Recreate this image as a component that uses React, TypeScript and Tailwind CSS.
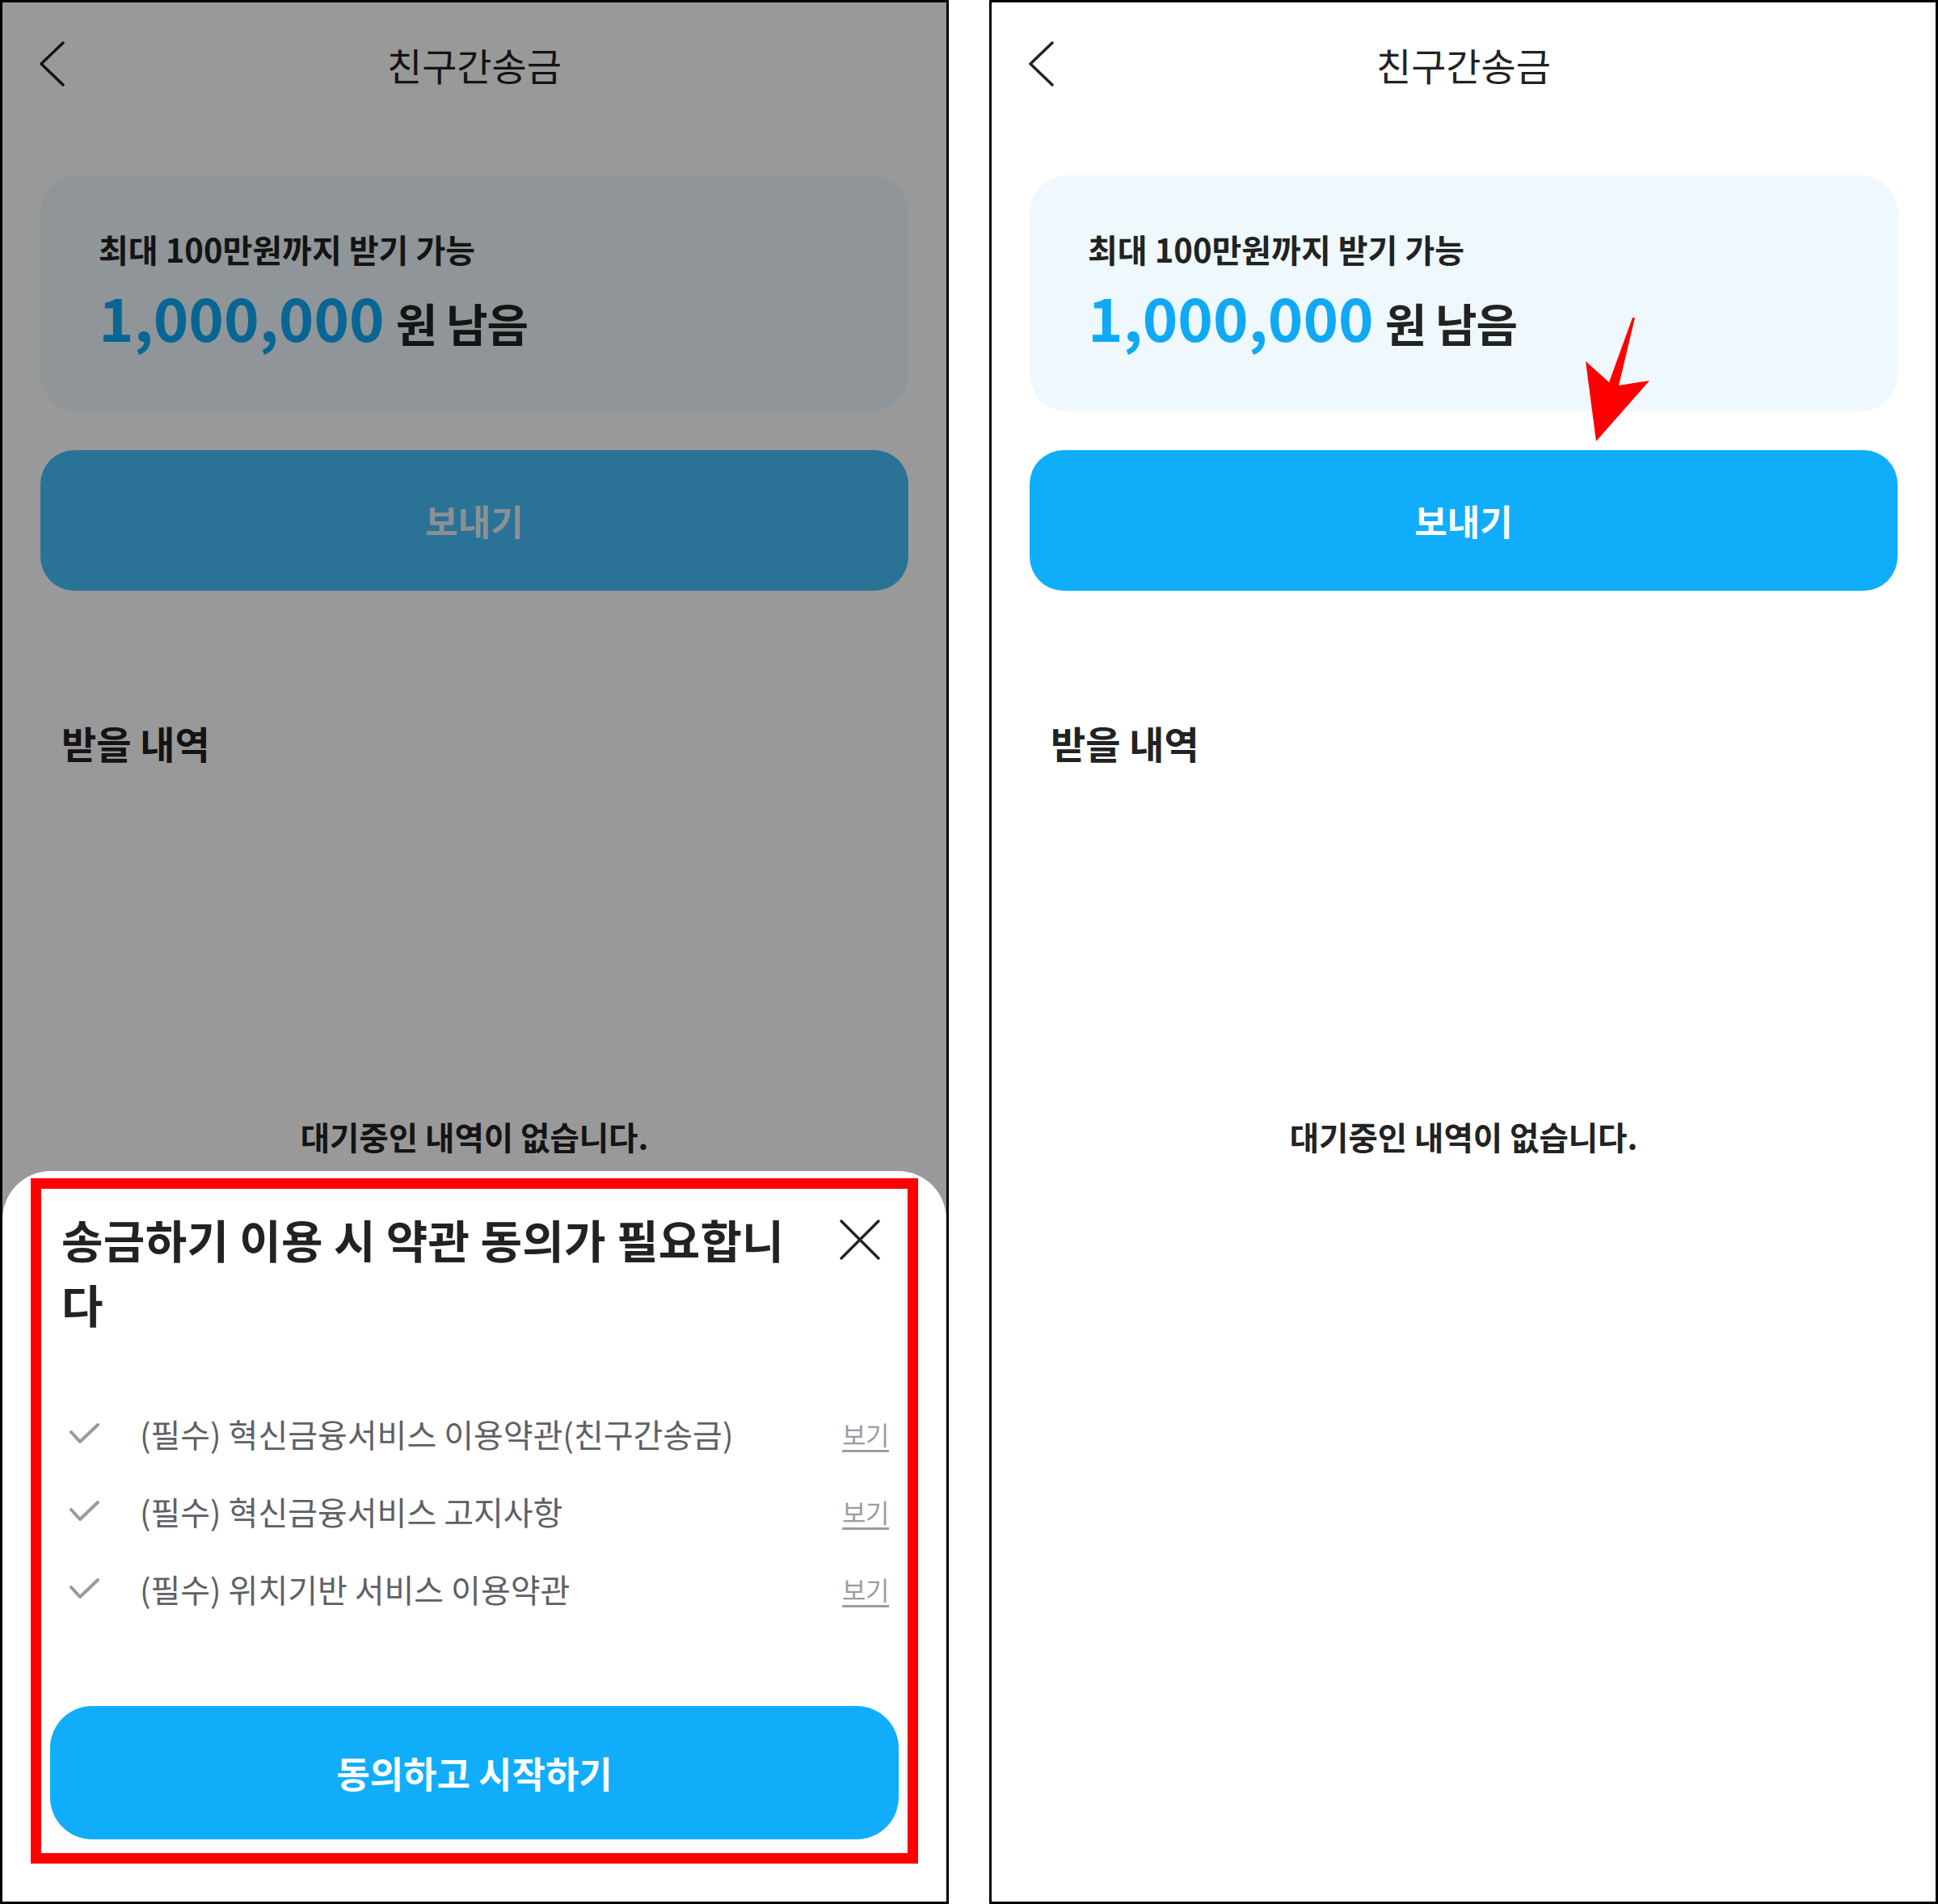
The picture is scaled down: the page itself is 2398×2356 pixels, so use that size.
import React from 'react';

const terms = [
  '(필수) 혁신금융서비스 이용약관(친구간송금)',
  '(필수) 혁신금융서비스 고지사항',
  '(필수) 위치기반 서비스 이용약관',
];

function BackIcon() {
  return (
    <svg width="32" height="56" viewBox="0 0 32 56" fill="none">
      <path d="M29 2 L2 28 L29 54" stroke="#222222" strokeWidth="3.5" strokeLinecap="round" strokeLinejoin="round" />
    </svg>
  );
}

function CheckIcon() {
  return (
    <svg width="40" height="28" viewBox="0 0 40 28" fill="none">
      <path d="M4 12 L15 24 L37 3" stroke="#9A9A9E" strokeWidth="4" strokeLinecap="round" strokeLinejoin="round" />
    </svg>
  );
}

function CloseIcon() {
  return (
    <svg width="50" height="50" viewBox="0 0 50 50" fill="none">
      <path d="M2 2 L48 48 M48 2 L2 48" stroke="#222222" strokeWidth="3.4" strokeLinecap="round" />
    </svg>
  );
}

function RedArrow() {
  return (
    <svg width="90" height="165" viewBox="0 0 90 165">
      <polygon points="63,5 34,85 5,59 18,158 84,83 46,89 66,5" fill="#FF0000" />
    </svg>
  );
}

function Screen({ dimmed = false }: { dimmed?: boolean }) {
  return (
    <div className="flex flex-col">
      <div className="grid h-[152px] grid-cols-[1fr_auto_1fr] items-center">
        <div className="pl-[46px]">
          <BackIcon />
        </div>
        <div className="text-[47px] leading-none text-[#222]">친구간송금</div>
        <div />
      </div>

      <div className="mx-[47px] mt-[62px] flex h-[292px] flex-col justify-center gap-[16px] rounded-[46px] bg-[#EEF8FD] pl-[72px]">
        <div className="text-[40px] font-bold leading-[48px] text-[#222]">최대 100만원까지 받기 가능</div>
        <div className="flex items-baseline leading-[86px]">
          <span className="text-[74px] font-bold text-[#0FA9F5]">1,000,000</span>
          <span className="ml-[14px] text-[56px] font-bold tracking-[-1px] text-[#222]">원 남음</span>
        </div>
      </div>

      <button
        className={
          dimmed
            ? 'mx-[47px] mt-[48px] flex h-[174px] items-center justify-center rounded-[42px] bg-[#46C0FA] text-[44px] font-bold text-[#E6F2F8]'
            : 'mx-[47px] mt-[48px] flex h-[174px] items-center justify-center rounded-[42px] bg-[#10AEFA] text-[44px] font-bold text-white'
        }
      >
        보내기
      </button>

      <div className="ml-[73px] mt-[158px] text-[47px] font-bold leading-[60px] text-[#222]">받을 내역</div>

      <div className="mt-[432px] text-center text-[39.5px] font-bold leading-[50px] text-[#222]">
        대기중인 내역이 없습니다.
      </div>
    </div>
  );
}

function TermsSheet() {
  return (
    <div className="absolute inset-x-0 bottom-0 h-[904px] rounded-t-[60px] bg-white px-[35px] pt-[9px]">
      <div className="flex h-[848px] flex-col border-[13px] border-[#FF0000]">
        <div className="flex items-start justify-between pl-[25px] pr-[34px] pt-[22px]">
          <div className="text-[56px] font-bold leading-[80px] tracking-[0.3px] text-[#222]">
            송금하기 이용 시 약관 동의가 필요합니
            <br />다
          </div>
          <div className="mt-[16px]">
            <CloseIcon />
          </div>
        </div>

        <div className="mt-[73px] flex flex-col">
          {terms.map((term) => (
            <div key={term} className="flex h-[96px] items-center pl-[33px] pr-[23px]">
              <CheckIcon />
              <span className="ml-[49px] flex-1 text-[40px] leading-none text-[#5F6066]">{term}</span>
              <span className="text-[32px] leading-none tracking-[-0.5px] text-[#9C9CA0] underline underline-offset-[6px]">보기</span>
            </div>
          ))}
        </div>

        <button className="mx-[11px] mt-[97px] flex h-[165px] items-center justify-center rounded-[52px] bg-[#10AEFA] text-[45px] font-bold text-white">
          동의하고 시작하기
        </button>
      </div>
    </div>
  );
}

export default function App() {
  return (
    <div className="flex h-[2356px] w-[2398px] gap-[50px] bg-white font-['Noto_Sans_CJK_KR',sans-serif]">
      <div className="relative h-[2356px] w-[1174px] overflow-hidden border-[3px] border-black bg-white">
        <Screen dimmed />
        <div className="absolute inset-0 bg-black/40" />
        <TermsSheet />
      </div>

      <div className="relative h-[2356px] w-[1174px] overflow-hidden border-[3px] border-black bg-white">
        <Screen />
        <div className="absolute left-[730px] top-[385px]">
          <RedArrow />
        </div>
      </div>
    </div>
  );
}
